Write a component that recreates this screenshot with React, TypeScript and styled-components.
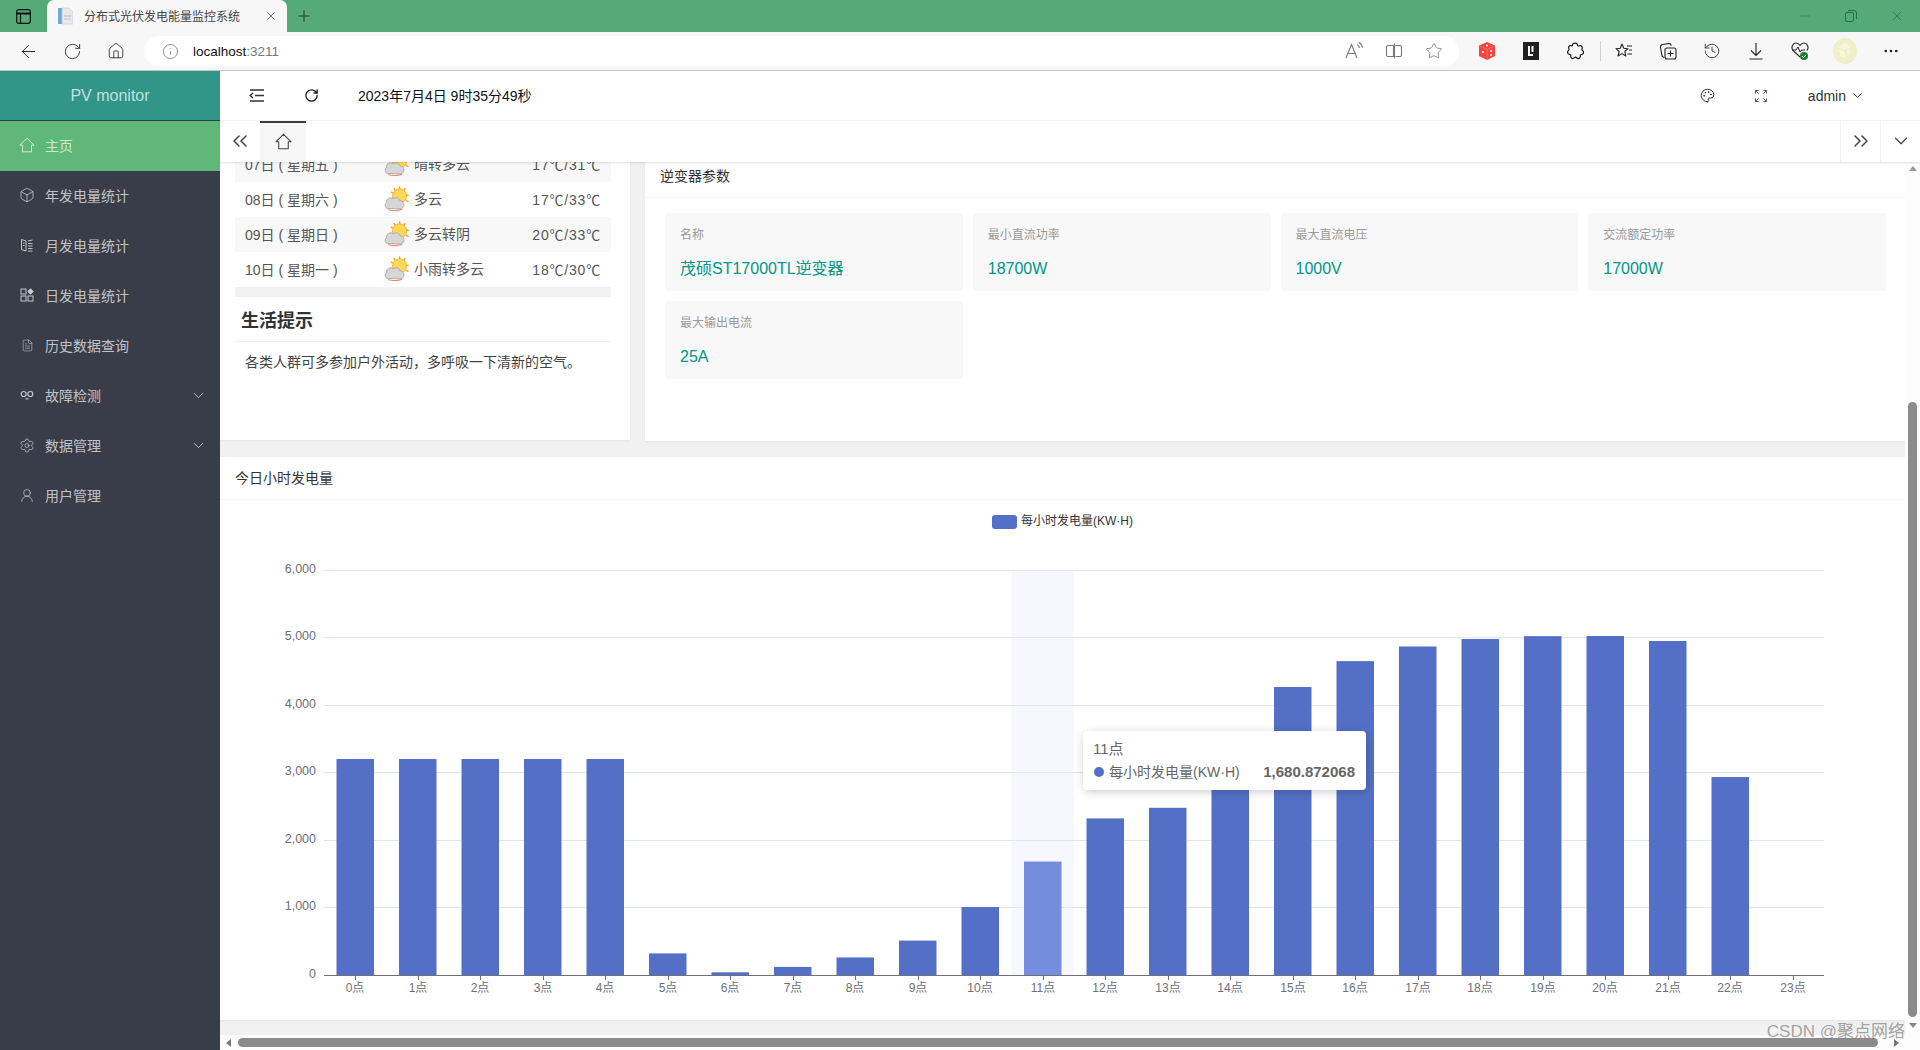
import React from "react";
import styled, { createGlobalStyle } from "styled-components";
import {
  ArrowLeft, RotateCw, Info, Star, ChevronDown, ChevronsLeft, ChevronsRight, Palette,
  History, Minus, X, Plus, Settings, FileText, Box, UserRound, MoreHorizontal, House,
} from "lucide-react";

const Global = createGlobalStyle`
  html, body { margin: 0; padding: 0; height: 100%; overflow: hidden; background: #fff; }
  body { font-family: "Liberation Sans", "Noto Sans CJK SC", sans-serif; color: #333; }
  * { box-sizing: border-box; }
`;

const Page = styled.div`
  position: relative; width: 1920px; height: 1050px; display: flex; flex-direction: column; overflow: hidden;
`;
const TabStrip = styled.div`
  height: 32px; background: #55ab77; display: flex; align-items: stretch; flex: none;
`;
const Slot = styled.span<{ $w: number; $color?: string }>`
  width: ${(p) => p.$w}px; flex: none; display: flex; align-items: center; justify-content: center;
  color: ${(p) => p.$color || "#222"};
`;
const BrowserTab = styled.div`
  width: 240px; background: #f7f7f7; border-radius: 7px 7px 0 0; display: flex; align-items: center;
  padding-left: 11px; flex: none;
`;
const TabTitle = styled.span`
  font-size: 12px; color: #444; margin: 0 0 2px 11px; width: 180px; white-space: nowrap;
`;
const Grow = styled.div`flex: 1;`;
const Toolbar = styled.div`
  height: 39px; flex: none; background: #f7f7f7; border-bottom: 1px solid #c4c4c4; display: flex; align-items: center; padding-left: 6px;
`;
const AddressPill = styled.div`
  width: 1315px; height: 30px; margin: 0 6px; background: #fff; border-radius: 15px; display: flex; align-items: center;
  padding: 0 5px 0 16px; flex: none;
`;
const Url = styled.span`
  font-size: 13.5px; color: #111; margin-left: 13px;
  & > em { font-style: normal; color: #777; }
`;
const ToolDivider = styled.span`
  width: 1px; height: 20px; background: #d0d0d0; margin: 0 1px 0 3px; flex: none;
`;
const Body = styled.div`flex: 1; display: flex; min-height: 0;`;
const Sidebar = styled.aside`
  width: 220px; flex: none; background: #393d49; display: flex; flex-direction: column;
`;
const Logo = styled.div`
  height: 49px; margin-bottom: 1px; background: #2f9688; color: rgba(255,255,255,.72); font-size: 16px;
  display: flex; align-items: center; justify-content: center;
`;
const NavItem = styled.div<{ $active?: boolean }>`
  height: 50px; display: flex; align-items: center; padding: 0 13px 2px 19px; font-size: 14px;
  color: rgba(255,255,255,.7);
  background: ${(p) => (p.$active ? "#5fb878" : "transparent")};
`;
const NavIcon = styled.span`
  width: 16px; height: 16px; margin-right: 10px; display: flex; align-items: center; justify-content: center; flex: none;
`;
const NavArrow = styled.span`margin-left: auto; display: flex;`;
const Main = styled.main`flex: 1; min-width: 0; display: flex; flex-direction: column;`;
const Header = styled.header`
  height: 50px; flex: none; display: flex; align-items: center; border-bottom: 1px solid #f6f6f6; background: #fff; padding-right: 55px;
`;
const DateText = styled.span`font-size: 14px; color: #111; margin: 0 0 2px 30px; white-space: nowrap;`;
const Admin = styled.span`
  margin-left: 20px; font-size: 14px; color: #333; display: flex; align-items: center; gap: 4px;
`;
const TabBar = styled.div`
  height: 41px; flex: none; display: flex; background: #fff; box-shadow: 0 1px 2px rgba(0,0,0,.12); position: relative; z-index: 2;
`;
const TabBtn = styled.span<{ $line?: boolean }>`
  width: 40px; flex: none; display: flex; align-items: center; justify-content: center; color: #444; padding-bottom: 2px;
  border-left: ${(p) => (p.$line ? "1px solid #f2f2f2" : "none")};
`;
const HomeTab = styled.span`
  width: 46px; height: 40px; flex: none; background: #f6f6f6; border-top: 2px solid #393d49; display: flex; align-items: center; justify-content: center; color: #444; padding-bottom: 2px;
`;
const ContentRow = styled.div`flex: 1; min-height: 0; display: flex;`;
const Scroller = styled.div`flex: 1; min-width: 0; overflow: hidden; background: #f1f1f1;`;
const Inner = styled.div`margin-top: -15px;`;
const TopRow = styled.div`display: flex; gap: 15px; height: 294px; margin-bottom: 16px;`;
const WeatherCard = styled.section`
  width: 410px; height: 293px; flex: none; background: #fff; padding: 0 19px 0 15px; box-shadow: 0 1px 2px rgba(0,0,0,.06);
`;
const WeatherRow = styled.div<{ $striped?: boolean }>`
  height: 35px; display: grid; grid-template-columns: 139px 30px 1fr auto; align-items: center; padding: 0 11px 2px 10px;
  font-size: 14px; color: #555;
  background: ${(p) => (p.$striped ? "#f8f8f8" : "#fff")};
`;
const WeatherDesc = styled.span`margin-top: -1px;`;
const WeatherTemp = styled.span`letter-spacing: .8px; margin-right: -1px;`;
const Band = styled.div`height: 10px; background: #f2f2f2;`;
const TipTitle = styled.h2`
  margin: 0; height: 45px; padding-left: 6px; font-size: 18px; line-height: 48px; font-weight: 700; color: #333; border-bottom: 1px solid #f0f0f0;
`;
const TipText = styled.p`margin: 10px 0 0; padding-left: 10px; font-size: 14px; line-height: 20px; color: #444;`;
const ParamCard = styled.section`
  flex: 1; margin-top: 8px; background: #fff; box-shadow: 0 1px 2px rgba(0,0,0,.06);
`;
const CardHead = styled.div`
  height: 43px; padding-left: 15px; font-size: 14px; line-height: 42px; color: #333; border-bottom: 1px solid #f6f6f6;
`;
const ParamGrid = styled.div`
  display: grid; grid-template-columns: repeat(4, 1fr); gap: 10px; padding: 15px 19px 0 20px;
`;
const ParamBox = styled.div`
  height: 78px; background: #f8f8f8; border-radius: 2px; padding: 12px 15px 0;
`;
const ParamLabel = styled.div`font-size: 12px; line-height: 20px; color: #999;`;
const ParamValue = styled.div`font-size: 16px; line-height: 24px; margin-top: 12px; color: #009688;`;
const ChartCard = styled.section`
  height: 563px; background: #fff; box-shadow: 0 1px 2px rgba(0,0,0,.06);
`;
const ChartBody = styled.div`position: relative; height: 520px;`;
const Tooltip = styled.div`
  position: absolute; left: 863px; top: 231px; width: 283px; height: 59px; background: #fff; border-radius: 4px;
  box-shadow: 1px 2px 10px rgba(0,0,0,.2); padding: 10px 11px 10px 10px; color: #666; font-size: 14px;
`;
const TipHead = styled.div`font-size: 15px; line-height: 15px; margin-bottom: 8px;`;
const TipRow = styled.div`display: flex; align-items: center; line-height: 16px;`;
const TipDot = styled.span`width: 10px; height: 10px; border-radius: 50%; background: #5470c6; margin: 0 5px 0 1px; flex: none;`;
const TipValue = styled.b`margin-left: auto; font-size: 15px; font-weight: 700;`;
const VScroll = styled.div`
  width: 15px; flex: none; background: #fdfdfd; display: flex; flex-direction: column; align-items: center;
`;
const VThumb = styled.div`width: 9px; height: 615px; margin-top: 231px; border-radius: 5px; background: #8b8b8b; flex: none;`;
const Tri = styled.span<{ $dir: "up" | "down" | "left" | "right"; $mt?: number }>`
  width: 0; height: 0; flex: none; border-style: solid; margin-top: ${(p) => p.$mt || 0}px;
  border-width: ${(p) => (p.$dir === "up" ? "0 4px 5px" : p.$dir === "down" ? "5px 4px 0" : p.$dir === "left" ? "4px 5px 4px 0" : "4px 0 4px 5px")};
  border-color: ${(p) =>
    p.$dir === "up" ? "transparent transparent #999" : p.$dir === "down" ? "#888 transparent transparent" : p.$dir === "left" ? "transparent #777 transparent transparent" : "transparent transparent transparent #777"};
`;
const HScroll = styled.div`
  height: 15px; flex: none; background: #fdfdfd; display: flex; align-items: center; padding-left: 6px;
`;
const HThumb = styled.div`width: 1640px; height: 9px; border-radius: 5px; background: #8b8b8b; margin: 0 16px 0 7px; flex: none;`;
const Watermark = styled.div`
  position: absolute; right: 15px; bottom: 6px; font-size: 17px; line-height: 24px; color: rgba(110,110,110,.62); white-space: nowrap; z-index: 5;
`;

const HomeShape = ({ size = 16 }: { size?: number }) => (
  <svg width={size} height={size} viewBox="0 0 16 16" fill="none" stroke="currentColor" strokeWidth="1">
    <path d="M8 1.2 15 8.2h-2.500v6.600h-9V8.200H1z" strokeLinejoin="round" />
  </svg>
);
const MonthIcon = () => (
  <svg width="14" height="14" viewBox="0 0 14 14" fill="none" stroke="currentColor" strokeWidth="1">
    <path d="M1.500 1.500 6 3v10L1.500 11.500zM8 3l4.500-1M8 5.500h4.500M8 8h4.500M8 10.500h4.500M8 13h4.500M3 5h1.500M3 7.500h1.500" />
  </svg>
);
const DayIcon = () => (
  <svg width="14" height="14" viewBox="0 0 14 14" fill="none" stroke="currentColor" strokeWidth="1">
    <rect x="1" y="1" width="5" height="5" /><rect x="1" y="8" width="5" height="5" /><rect x="8" y="8" width="5" height="5" />
    <path d="M10.500 .8 13.200 3.500 10.500 6.200 7.800 3.500z" fill="currentColor" />
  </svg>
);
const LinkIcon = () => (
  <svg width="14" height="14" viewBox="0 0 14 14" fill="none" stroke="currentColor" strokeWidth="1.2">
    <circle cx="3.700" cy="6" r="2.500" /><circle cx="10.300" cy="6" r="2.500" /><path d="M5.500 10.800h3" />
  </svg>
);
const Hamburger = () => (
  <svg width="16" height="15" viewBox="0 0 16 15" fill="none" stroke="#333" strokeWidth="1.5">
    <path d="M1 2h14M6 7.500h9M1 13h14M4 5 1.200 7.500 4 10" />
  </svg>
);
const FullIcon = () => (
  <svg width="12" height="12" viewBox="0 0 12 12" fill="none" stroke="#556" strokeWidth="1">
    <path d="M.5 3.500v-3h3M.7.7l3 3M11.500 3.500v-3h-3M11.300.7l-3 3M.5 8.500v3h3M.7 11.300l3-3M11.500 8.500v3h-3M11.300 11.300l-3-3" />
  </svg>
);
const WeatherIcon = () => (
  <svg width="25" height="25" viewBox="0 0 24 24">
    <g stroke="#f0a020" strokeWidth="1.300">
      <path d="M15 .5v3M9.500 2l1.500 2.500M20.500 2 19 4.500M23.800 9h-2.500M23.500 15 21 13.700M6.500 5.500l2 1.500" />
    </g>
    <circle cx="15" cy="9.500" r="6.800" fill="#ffd85a" stroke="#eda92c" strokeWidth=".8" />
    <path d="M3.500 21.500C.8 21.200.2 17.500 2.300 16c-.3-3.800 3.900-6 6.500-3.700 2.300-2 6.100-.8 6.600 2 3.200-.4 5 4.400 2.800 6.500-1.100 1.100-3.400 1.200-14.700.7z" fill="#d6d6d6" stroke="#9c9c9c" strokeWidth=".7" />
    <path d="M4 22.600c3.200 1.300 10 1.300 13.500-.2" stroke="#e88a70" strokeWidth="1.100" fill="none" />
  </svg>
);
const Favicon = () => (
  <svg width="15" height="18" viewBox="0 0 15 18">
    <rect x="0" y="1" width="4" height="16" fill="#6ea8d8" />
    <path d="M4 1h7l4 4v12H4z" fill="#e6e9ee" stroke="#c8ccd2" strokeWidth=".6" />
    <path d="M6 9h7M6 12h7" stroke="#b8c0cc" />
  </svg>
);
const ReadAloud = () => (
  <svg width="20" height="20" viewBox="0 0 20 20" fill="none" stroke="#777" strokeWidth="1.100">
    <path d="M2 17 7.500 3.500 13 17M4 12.500h7M13 3.500c1.500.8 2.300 2 2.500 3.500M15 1.500c2 1 3.200 3 3.400 5.300" />
  </svg>
);
const SplitIcon = () => (
  <svg width="18" height="18" viewBox="0 0 18 18" fill="none" stroke="#777" strokeWidth="1.100">
    <path d="M8.500 3.500H3a1.500 1.500 0 0 0-1.500 1.500v8A1.500 1.500 0 0 0 3 14.500h5.500zM9.500 1.500v15M10.500 3.500H15a1.500 1.500 0 0 1 1.500 1.500v8a1.500 1.500 0 0 1-1.500 1.500h-4.500" />
  </svg>
);
const DiceIcon = () => (
  <svg width="18" height="20" viewBox="0 0 18 20">
    <path d="M9 1 17 4.500V15L9 19 1 15V4.500z" fill="#f4453c" />
    <path d="M1 4.500 9 8.500 17 4.500M9 8.500V19" stroke="#ff8a80" strokeWidth=".6" fill="none" />
    <g fill="#fff"><circle cx="9" cy="4.500" r="1" /><circle cx="5" cy="11" r="1" /><circle cx="13" cy="10" r="1" /><circle cx="13" cy="14" r="1" /></g>
  </svg>
);
const NoteIcon = () => (
  <svg width="16" height="18" viewBox="0 0 16 18">
    <rect width="16" height="18" fill="#202020" />
    <path d="M5 4h2v8h3v2H5z" fill="#fff" /><rect x="8.500" y="4" width="2" height="6" fill="#fff" />
  </svg>
);
const ExtensionIcon = () => (
  <svg width="18" height="18" viewBox="0 0 18 18" fill="none" stroke="#111" strokeWidth="1.150" strokeLinejoin="round">
    <path d="M6.500 3c0-2.600 5-2.600 5 0 0 1 1 1.200 2 .8 2-.8 3.300 1.200 2.500 3-.4 1 0 1.400.7 1.900 1.500 1.200 1 3.300-1 3.700-1.200.2-1.500.7-1.400 1.800.2 2.200-2.300 3-3.500 1.700-1-1-1.600-1-2.600 0-1.500 1.400-3.700.3-3.300-1.800.2-1-.3-1.500-1.300-1.700C1.500 12 1 9.800 2.300 8.600c.8-.7 1-1.200.5-2.200C2 4.500 3.800 2.900 5.300 3.700c.7.300 1.200 0 1.200-.7z" />
  </svg>
);
const FavList = () => (
  <svg width="18" height="18" viewBox="0 0 18 18" fill="none" stroke="#222" strokeWidth="1.100">
    <path d="M7 2 8.800 6.300 13 6.700 9.800 9.500 10.800 14 7 11.600 3 14 4.200 9.500 1 6.700 5.300 6.300zM12 4h5M14 8h3M12.500 12h4.500" strokeLinejoin="round" />
  </svg>
);
const CollectIcon = () => (
  <svg width="18" height="18" viewBox="0 0 18 18" fill="none" stroke="#222" strokeWidth="1.100">
    <path d="M5 15.500 3 14 1.500 5.500C1.300 4 2 3 3.500 2.500L10 1.500c1.200 0 2 .8 2.300 2" />
    <rect x="6" y="6" width="11" height="11" rx="2" /><path d="M11.500 8.500v6M8.500 11.500h6" />
  </svg>
);
const DownloadIcon = () => (
  <svg width="14" height="18" viewBox="0 0 14 18" fill="none" stroke="#222" strokeWidth="1.100">
    <path d="M7 1v12M2 8.500 7 13.500 12 8.500M.5 17h13" />
  </svg>
);
const HealthIcon = () => (
  <svg width="18" height="20" viewBox="0 0 18 20" fill="none">
    <path d="M9 16 2 9.500C-.5 6 2 2 5 2c2 0 3 1 4 2.500C10 3 11 2 13 2c3 0 5.500 4 3 7.500" stroke="#222" strokeWidth="1.100" />
    <path d="M1 9h4l2-3 2 5 1.500-2H14" stroke="#222" strokeWidth="1" />
    <circle cx="13" cy="15" r="4" fill="#1a7f2e" />
    <path d="M11 15l1.500 1.500L15 14" stroke="#fff" strokeWidth=".9" />
  </svg>
);
const Avatar = () => (
  <svg width="24" height="26" viewBox="0 0 24 26">
    <ellipse cx="12" cy="13" rx="12" ry="13" fill="#eff0c8" />
    <path d="M12 4 18 10 15 20 8 19 5 10z" fill="#f6f7da" />
    <path d="M5 10 12 13 18 10M12 13 15 20" stroke="#e4e6b4" strokeWidth=".8" fill="none" />
  </svg>
);
const RestoreIcon = () => (
  <svg width="12" height="12" viewBox="0 0 12 12" fill="none" stroke="#2f6b48" strokeWidth="1">
    <rect x=".5" y="2.500" width="8" height="9" rx="1.500" /><path d="M3 .5h6a2.500 2.500 0 0 1 2.500 2.500v6" />
  </svg>
);
const WinIcon = () => (
  <svg width="15" height="15" viewBox="0 0 15 15" fill="none" stroke="#111" strokeWidth="1.200">
    <rect x=".7" y=".7" width="13.600" height="13.600" rx="2" /><path d="M.7 4.500h13.600" strokeWidth="2" /><path d="M4.500 4.500v9.800" />
  </svg>
);

const values = [3200, 3200, 3200, 3200, 3200, 320, 40, 120, 260, 510, 1007, 1680.872, 2320, 2477, 3200, 4267, 4650, 4867, 4978, 5020, 5022, 4948, 2933, 0];
const X0 = 104;
const CAT = 62.5;
const AXIS = 475;
const UNIT = 67.5 / 1000;
const FONT = '"Liberation Sans", "Noto Sans CJK SC", sans-serif';

const BarChart = () => (
  <svg width="1685" height="520" viewBox="0 0 1685 520" role="img">
    <rect x="772" y="15" width="25" height="14" rx="3" fill="#5470c6" />
    <text x="801" y="25" fontSize="12" fill="#333" fontFamily={FONT}>每小时发电量(KW·H)</text>
    <rect x={X0 + CAT * 11} y="70" width={CAT} height={AXIS - 70} fill="#f6f8fd" />
    {[0, 1000, 2000, 3000, 4000, 5000, 6000].map((v) => {
      const y = Math.floor(AXIS - v * UNIT);
      return (
        <g key={v}>
          {v > 0 && <line x1={X0} x2={X0 + 1500} y1={y + 0.5} y2={y + 0.5} stroke="#e0e6f1" />}
          <text x={X0 - 8} y={y + 3} textAnchor="end" fontSize="12.500" fill="#6e7079" fontFamily={FONT}>
            {v.toLocaleString("en-US")}
          </text>
        </g>
      );
    })}
    {values.map((v, i) => {
      const h = v * UNIT;
      return (
        <rect key={i} x={X0 + CAT * i + 12.5} y={AXIS - h} width="37.500" height={h} fill={i === 11 ? "#748ddd" : "#5470c6"} />
      );
    })}
    <line x1={X0} x2={X0 + 1500} y1={AXIS + 0.5} y2={AXIS + 0.5} stroke="#6e7079" />
    {values.map((_, i) => {
      const x = Math.round(X0 + CAT * (i + 0.5));
      return (
        <g key={i}>
          <line x1={x + 0.5} x2={x + 0.5} y1={AXIS} y2={AXIS + 5} stroke="#6e7079" />
          <text x={x} y={AXIS + 17} textAnchor="middle" fontSize="12" fill="#6e7079" fontFamily={FONT}>{`${i}点`}</text>
        </g>
      );
    })}
  </svg>
);

const nav = [
  { label: "主页", icon: <HomeShape size={16} />, active: true },
  { label: "年发电量统计", icon: <Box size={16} strokeWidth={1.2} /> },
  { label: "月发电量统计", icon: <MonthIcon /> },
  { label: "日发电量统计", icon: <DayIcon /> },
  { label: "历史数据查询", icon: <FileText size={13} strokeWidth={1.1} /> },
  { label: "故障检测", icon: <LinkIcon />, arrow: true },
  { label: "数据管理", icon: <Settings size={17} strokeWidth={1.1} />, arrow: true },
  { label: "用户管理", icon: <UserRound size={17} strokeWidth={1.1} /> },
];
const weather = [
  { d: "07日 ( 星期五 )", w: "晴转多云", t: "17℃/31℃" },
  { d: "08日 ( 星期六 )", w: "多云", t: "17℃/33℃" },
  { d: "09日 ( 星期日 )", w: "多云转阴", t: "20℃/33℃" },
  { d: "10日 ( 星期一 )", w: "小雨转多云", t: "18℃/30℃" },
];
const params = [
  { k: "名称", v: "茂硕ST17000TL逆变器" },
  { k: "最小直流功率", v: "18700W" },
  { k: "最大直流电压", v: "1000V" },
  { k: "交流额定功率", v: "17000W" },
  { k: "最大输出电流", v: "25A" },
];

export default function App() {
  return (
    <Page>
      <Global />
      <TabStrip>
        <Slot $w={47}><WinIcon /></Slot>
        <BrowserTab>
          <Favicon />
          <TabTitle>分布式光伏发电能量监控系统</TabTitle>
          <Slot $w={14} $color="#444"><X size={14} strokeWidth={1.2} /></Slot>
        </BrowserTab>
        <Slot $w={34}><Plus size={18} strokeWidth={1.1} /></Slot>
        <Grow />
        <Slot $w={46} $color="#2f6b48"><Minus size={14} strokeWidth={1} /></Slot>
        <Slot $w={46}><RestoreIcon /></Slot>
        <Slot $w={46} $color="#2f6b48"><X size={16} strokeWidth={1} /></Slot>
      </TabStrip>
      <Toolbar>
        <Slot $w={44}><ArrowLeft size={21} strokeWidth={1.1} /></Slot>
        <Slot $w={44}><RotateCw size={19} strokeWidth={1.1} /></Slot>
        <Slot $w={44}><House size={18} strokeWidth={1.1} /></Slot>
        <AddressPill>
          <Slot $w={20} $color="#666"><Info size={17} strokeWidth={1} /></Slot>
          <Url>localhost<em>:3211</em></Url>
          <Grow />
          <Slot $w={40}><ReadAloud /></Slot>
          <Slot $w={40}><SplitIcon /></Slot>
          <Slot $w={40} $color="#777"><Star size={18} strokeWidth={1.1} /></Slot>
        </AddressPill>
        <Slot $w={44}><DiceIcon /></Slot>
        <Slot $w={44}><NoteIcon /></Slot>
        <Slot $w={44}><ExtensionIcon /></Slot>
        <ToolDivider />
        <Slot $w={44}><FavList /></Slot>
        <Slot $w={44}><CollectIcon /></Slot>
        <Slot $w={44}><History size={18} strokeWidth={1.1} /></Slot>
        <Slot $w={44}><DownloadIcon /></Slot>
        <Slot $w={44}><HealthIcon /></Slot>
        <Slot $w={46}><Avatar /></Slot>
        <Slot $w={46}><MoreHorizontal size={18} strokeWidth={1.6} /></Slot>
      </Toolbar>
      <Body>
        <Sidebar>
          <Logo>PV monitor</Logo>
          {nav.map((n) => (
            <NavItem key={n.label} $active={n.active}>
              <NavIcon>{n.icon}</NavIcon>
              {n.label}
              {n.arrow && <NavArrow><ChevronDown size={17} strokeWidth={1.3} /></NavArrow>}
            </NavItem>
          ))}
        </Sidebar>
        <Main>
          <Header>
            <Slot $w={74}><Hamburger /></Slot>
            <Slot $w={34}><RotateCw size={15} strokeWidth={2.2} /></Slot>
            <DateText>2023年7月4日 9时35分49秒</DateText>
            <Grow />
            <Slot $w={55}><Palette size={15} strokeWidth={1.5} /></Slot>
            <Slot $w={53}><FullIcon /></Slot>
            <Admin>admin<ChevronDown size={15} strokeWidth={1.6} /></Admin>
          </Header>
          <TabBar>
            <TabBtn><ChevronsLeft size={24} strokeWidth={1.5} /></TabBtn>
            <HomeTab><HomeShape size={17} /></HomeTab>
            <Grow />
            <TabBtn $line><ChevronsRight size={24} strokeWidth={1.5} /></TabBtn>
            <TabBtn $line><ChevronDown size={22} strokeWidth={1.3} /></TabBtn>
          </TabBar>
          <ContentRow>
            <Scroller>
              <Inner>
                <TopRow>
                  <WeatherCard>
                    {weather.map((r, i) => (
                      <WeatherRow key={r.d} $striped={i % 2 === 0}>
                        <span>{r.d}</span>
                        <WeatherIcon />
                        <WeatherDesc>{r.w}</WeatherDesc>
                        <WeatherTemp>{r.t}</WeatherTemp>
                      </WeatherRow>
                    ))}
                    <Band />
                    <TipTitle>生活提示</TipTitle>
                    <TipText>各类人群可多参加户外活动，多呼吸一下清新的空气。</TipText>
                  </WeatherCard>
                  <ParamCard>
                    <CardHead>逆变器参数</CardHead>
                    <ParamGrid>
                      {params.map((p) => (
                        <ParamBox key={p.k}>
                          <ParamLabel>{p.k}</ParamLabel>
                          <ParamValue>{p.v}</ParamValue>
                        </ParamBox>
                      ))}
                    </ParamGrid>
                  </ParamCard>
                </TopRow>
                <ChartCard>
                  <CardHead>今日小时发电量</CardHead>
                  <ChartBody>
                    <BarChart />
                    <Tooltip>
                      <TipHead>11点</TipHead>
                      <TipRow>
                        <TipDot />
                        每小时发电量(KW·H)
                        <TipValue>1,680.872068</TipValue>
                      </TipRow>
                    </Tooltip>
                  </ChartBody>
                </ChartCard>
              </Inner>
            </Scroller>
            <VScroll>
              <Tri $dir="up" $mt={4} />
              <VThumb />
              <Tri $dir="down" $mt={6} />
            </VScroll>
          </ContentRow>
          <HScroll>
            <Tri $dir="left" />
            <HThumb />
            <Tri $dir="right" />
          </HScroll>
        </Main>
      </Body>
      <Watermark>CSDN @聚点网络</Watermark>
    </Page>
  );
}
